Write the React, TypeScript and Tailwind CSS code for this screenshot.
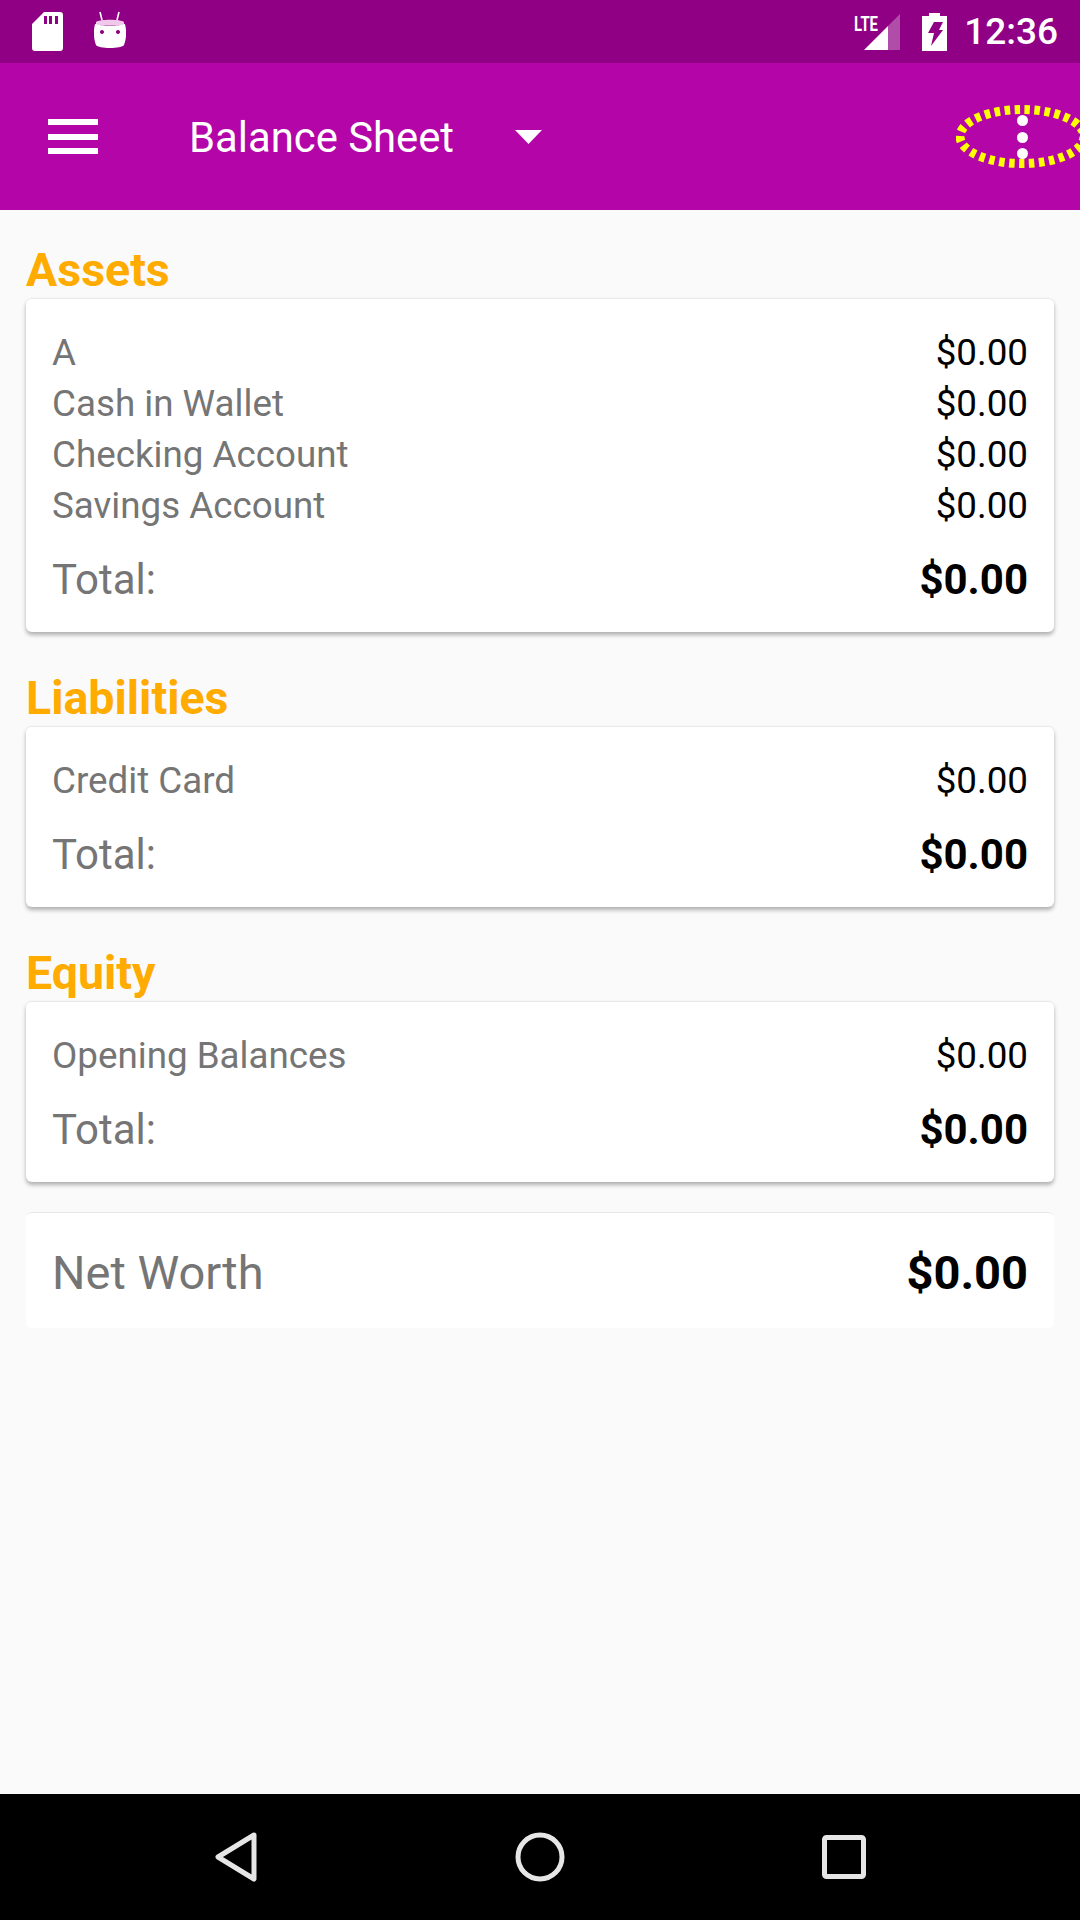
const rowLabel = 'text-[#757575] text-[36.75px] leading-[51px]';
const rowValue = 'text-black text-[36.75px] leading-[51px]';

function Section({ title, rows }: { title: string; rows: string[] }) {
  return (
    <section>
      <h2 className="text-[#ffab00] text-[46.5px] leading-[50px] font-bold h-[50px] mt-[-3px] mb-[3px]">{title}</h2>
      <div className="bg-white rounded-[6px] border-t border-[#e8e8e8] shadow-[0_3px_4px_rgba(0,0,0,0.3)] px-[26px] pt-[28px] pb-[28px]">
        {rows.map((row) => (
          <div key={row} className="flex justify-between">
            <span className={rowLabel}>{row}</span>
            <span className={rowValue}>$0.00</span>
          </div>
        ))}
        <div className="flex justify-between items-center mt-[23px] h-[50px]">
          <span className="text-[#757575] text-[42px]">Total:</span>
          <span className="text-black text-[42px] font-bold">$0.00</span>
        </div>
      </div>
    </section>
  );
}

function StatusBar() {
  return (
    <div className="h-[63px] bg-[#8f0085] flex items-center pl-[32px] pr-[22px]">
      <svg width="31" height="39" viewBox="0 0 31 39" className="mt-[-1px]">
        <path
          fill="#fff"
          fillRule="evenodd"
          d="M12 0H28a3 3 0 0 1 3 3V36a3 3 0 0 1-3 3H3a3 3 0 0 1-3-3V12ZM12 4v8h3V4ZM17 4v8h3V4ZM23 4v8h3V4Z"
        />
      </svg>
      <svg width="32" height="38" viewBox="0 0 32 38" className="ml-[31px] mt-[-4px]">
        <path d="M6 1l2 8M25 1l-2 8" stroke="#fff" strokeWidth="1.6" />
        <path fill="#f0c8ea" d="M2 11c3-3 25-3 28 0v3H2Z" />
        <path fill="#fff" fillRule="evenodd" d="M1 13c6 2 24 2 30 0 2 8 1 16-1 21-2 4-26 4-28 0-2-5-3-13-1-21ZM8 19a2 2 0 1 0 .01 0ZM24 19a2 2 0 1 0 .01 0Z" />
      </svg>
      <div className="flex-1" />
      <svg width="46" height="38" viewBox="0 0 46 38">
        <path fill="#fff" d="M10 37 34 13V37Z" />
        <path fill="#fff" fillOpacity="0.3" d="M34 13 46 1V37H34Z" />
        <text x="0" y="18" fill="#fff" fontSize="21" fontWeight="700" fontFamily="Roboto, sans-serif" textLength="24" lengthAdjust="spacingAndGlyphs">LTE</text>
      </svg>
      <svg width="25" height="38" viewBox="0 0 25 38" className="ml-[22px]">
        <path fill="#fff" fillRule="evenodd" d="M7 0h11v3h7V38H0V3h7ZM12 9h9l-4 8h4L9 33l3-13H6Z" />
      </svg>
      <span className="ml-[17px] text-white text-[37px] font-medium leading-none">12:36</span>
    </div>
  );
}

function Toolbar() {
  return (
    <div className="relative h-[147px] bg-[#b305a8] flex items-center overflow-hidden">
      <div className="ml-[48px] w-[50px] flex flex-col gap-[8.5px]">
        <div className="h-[6px] bg-white" />
        <div className="h-[6px] bg-white" />
        <div className="h-[6px] bg-white" />
      </div>
      <span className="ml-[91px] mt-[3px] text-white text-[41.8px] leading-none">Balance Sheet</span>
      <svg width="27" height="14" viewBox="0 0 27 14" className="ml-[61px]">
        <path fill="#fff" d="M0 0h27L13.5 14Z" />
      </svg>
      <div className="absolute left-[1017px] top-[52px] flex flex-col gap-[5.5px]">
        <div className="w-[11px] h-[11px] rounded-full bg-white" />
        <div className="w-[11px] h-[11px] rounded-full bg-white" />
        <div className="w-[11px] h-[11px] rounded-full bg-white" />
      </div>
      <svg width="130" height="72" viewBox="0 0 130 72" className="absolute left-[956px] top-[38px]">
        <ellipse cx="66" cy="35.5" rx="62" ry="27" fill="none" stroke="#ffff00" strokeWidth="9" strokeDasharray="5.5 4.5" />
      </svg>
    </div>
  );
}

function NavBar() {
  return (
    <div className="h-[126px] bg-black flex items-center justify-center gap-[257px]">
      <svg width="44" height="50" viewBox="0 0 44 50">
        <path d="M40 3 4 25 40 47Z" fill="none" stroke="#e6e6e6" strokeWidth="5" strokeLinejoin="round" />
      </svg>
      <svg width="50" height="50" viewBox="0 0 50 50">
        <circle cx="25" cy="25" r="22" fill="none" stroke="#e6e6e6" strokeWidth="5" />
      </svg>
      <svg width="44" height="44" viewBox="0 0 44 44">
        <rect x="2.5" y="2.5" width="39" height="39" rx="2" fill="none" stroke="#e6e6e6" strokeWidth="5" />
      </svg>
    </div>
  );
}

export default function App() {
  return (
    <div className="w-[1080px] h-[1920px] flex flex-col bg-[#fafafa] font-['Roboto',sans-serif]">
      <StatusBar />
      <Toolbar />
      <main className="flex-1 px-[26px] pt-[38px]">
        <div className="flex flex-col gap-[44px]">
          <Section title="Assets" rows={['A', 'Cash in Wallet', 'Checking Account', 'Savings Account']} />
          <Section title="Liabilities" rows={['Credit Card']} />
          <Section title="Equity" rows={['Opening Balances']} />
        </div>
        <div className="bg-white rounded-[6px] border-t border-[#e8e8e8] mt-[30px] h-[116px] px-[26px] pt-[5px] flex justify-between items-center">
          <span className="text-[#757575] text-[47px]">Net Worth</span>
          <span className="text-black text-[47px] font-bold">$0.00</span>
        </div>
      </main>
      <NavBar />
    </div>
  );
}
